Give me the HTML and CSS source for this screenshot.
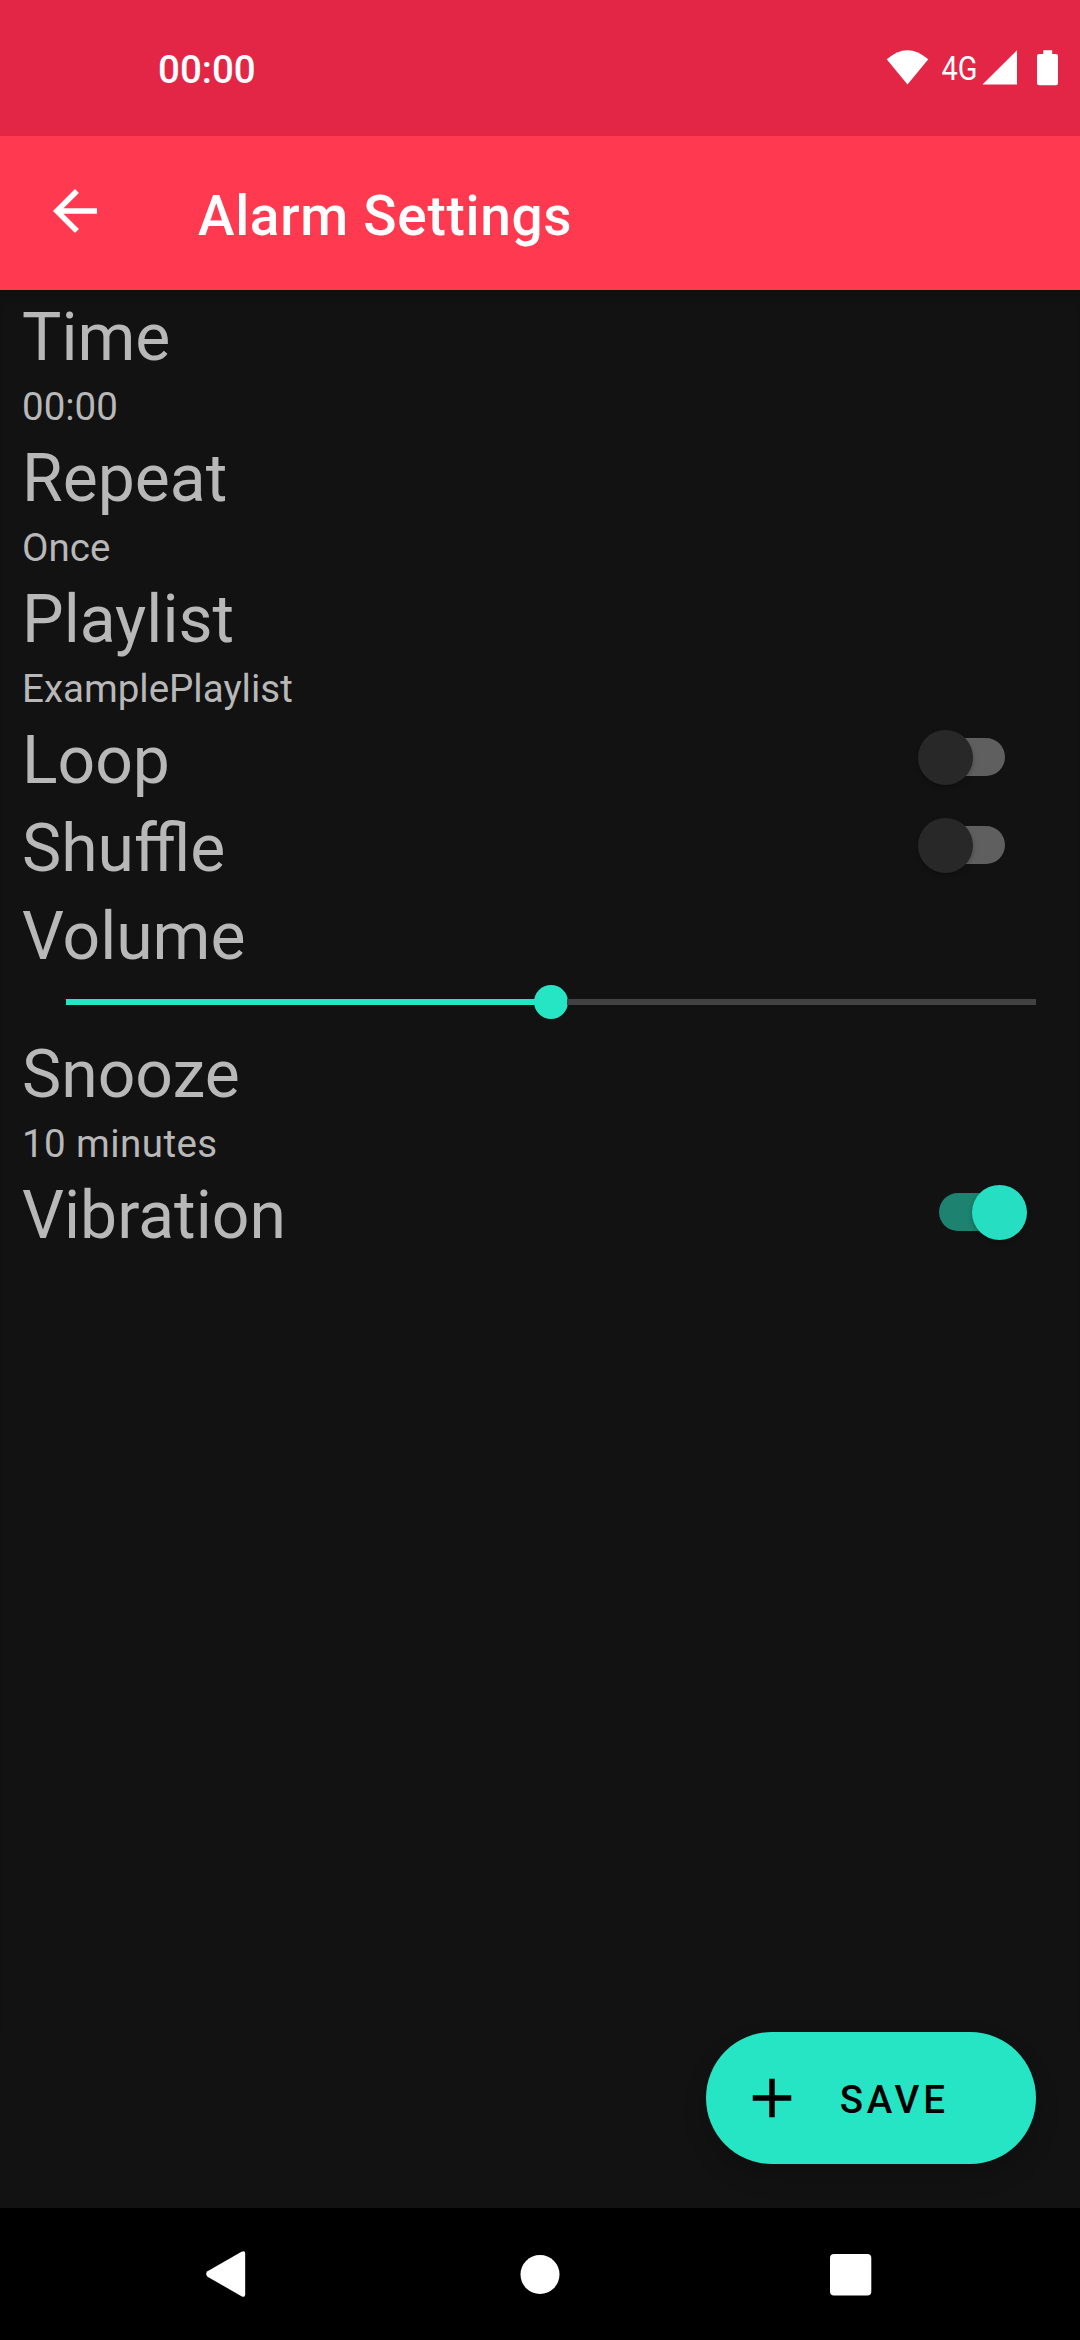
FILE: index.html
```html
<!DOCTYPE html>
<html lang="en">
<head>
<meta charset="utf-8">
<title>Alarm Settings</title>
<link rel="stylesheet" href="styles.css">
</head>
<body>
<div class="screen">
  <div class="status-bar">
    <span class="clock">00:00</span>
    <svg class="status-icons" width="180" height="50" viewBox="880 43 180 50" fill="#fff">
      <path d="M886.7 59.3Q907.5 41 928.3 59.3L907.5 84.5Z"/>
      <text class="network" x="941.5" y="80" textLength="36" lengthAdjust="spacingAndGlyphs">4G</text>
      <path d="M1017 50.3V84.5H982.5Z"/>
      <path d="M1043.3 50.3h8.9v3.7h3.8q2 0 2 2v27.3q0 2-2 2h-17q-2 0-2-2V56q0-2 2-2h4.3z"/>
    </svg>
  </div>
  <header class="toolbar">
    <svg class="back" width="66" height="66" viewBox="0 0 24 24" fill="#fff"><path d="M20 11H7.83l5.59-5.59L12 4l-8 8 8 8 1.41-1.41L7.83 13H20v-2z"/></svg>
    <h1 class="title">Alarm Settings</h1>
  </header>
  <main class="settings">
    <div class="row"><span class="label">Time</span></div>
    <div class="value">00:00</div>
    <div class="row"><span class="label">Repeat</span></div>
    <div class="value">Once</div>
    <div class="row"><span class="label">Playlist</span></div>
    <div class="value">ExamplePlaylist</div>
    <div class="row"><span class="label">Loop</span><span class="switch"><span class="thumb"></span></span></div>
    <div class="row"><span class="label">Shuffle</span><span class="switch"><span class="thumb"></span></span></div>
    <div class="row"><span class="label">Volume</span></div>
    <div class="slider"><span class="fill"></span><span class="knob"></span><span class="rest"></span></div>
    <div class="row"><span class="label">Snooze</span></div>
    <div class="value spaced">10 minutes</div>
    <div class="row"><span class="label">Vibration</span><span class="switch on"><span class="thumb"></span></span></div>
  </main>
  <div class="actions">
    <button class="save">
      <svg class="plus" width="66" height="66" viewBox="0 0 24 24"><path d="M19 13h-6v6h-2v-6H5v-2h6V5h2v6h6v2z"/></svg>
      <span>SAVE</span>
    </button>
  </div>
  <nav class="nav-bar">
    <svg width="60" height="60" viewBox="0 0 60 60" fill="#fff"><path d="M11.5 27.3L45.5 7.8Q49.2 6 49.2 9.5V50.5Q49.2 54 45.5 52.2L11.5 32.7Q8.8 30 11.5 27.3Z"/></svg>
    <svg width="60" height="60" viewBox="0 0 60 60" fill="#fff"><circle cx="31" cy="30.5" r="19.5"/></svg>
    <svg width="60" height="60" viewBox="0 0 60 60" fill="#fff"><rect x="9" y="10" width="41.3" height="41.5" rx="4"/></svg>
  </nav>
</div>
</body>
</html>
```

FILE: styles.css
```css
* { box-sizing: border-box; }

body {
  margin: 0;
  background: #121212;
  font-family: Roboto, "Liberation Sans", sans-serif;
}

.screen {
  width: 1080px;
  height: 2340px;
  display: flex;
  flex-direction: column;
  background: #121212;
}

.status-bar {
  height: 136px;
  padding: 0 20px 0 158px;
  display: flex;
  justify-content: space-between;
  align-items: center;
  background: #e32645;
  color: #fff;
}

.clock {
  font-size: 38.5px;
  line-height: 46px;
  font-weight: 500;
  padding-top: 3px;
}

.network { font-size: 33px; }

.toolbar {
  height: 154px;
  padding-left: 42px;
  display: flex;
  align-items: center;
  background: #ff394f;
  color: #fff;
}

.back { margin-bottom: 4px; }

.title {
  margin: 0 0 0 90px;
  padding-top: 6px;
  font-size: 55px;
  line-height: 66px;
  font-weight: 500;
  letter-spacing: 0.69px;
}

.settings {
  flex: 1;
  color: #b8b8b8;
  box-shadow: inset 0 10px 10px -4px rgba(0, 0, 0, 0.12);
}

.row {
  height: 88px;
  padding: 0 53px 0 22px;
  display: flex;
  justify-content: space-between;
  align-items: center;
}

.label {
  font-size: 66px;
  line-height: 81px;
  padding-top: 7px;
}

.value {
  height: 53px;
  padding: 5px 22px 0;
  font-size: 38.5px;
  line-height: 48px;
}

.spaced { letter-spacing: 0.43px; }

.switch {
  width: 66px;
  height: 38px;
  margin-right: 22px;
  border-radius: 19px;
  display: flex;
  align-items: center;
  background: #5f5f5f;
}

.thumb {
  flex: none;
  width: 55px;
  height: 55px;
  margin-left: -21px;
  border-radius: 50%;
  background: #282828;
  box-shadow: 0 2px 4px rgba(0, 0, 0, 0.25);
}

.switch.on { background: #1d8270; }

.switch.on .thumb {
  margin-left: 33px;
  background: #26dfc3;
}

.slider {
  height: 50px;
  padding: 0 44px 0 66px;
  display: flex;
  align-items: center;
}

.fill, .rest {
  flex: 1;
  height: 6px;
}

.fill { background: #26e5c5; }
.rest { background: #424242; }

.knob {
  width: 34px;
  height: 34px;
  margin: 0 -1px;
  border-radius: 50%;
  background: #26e5c5;
}

.actions {
  padding: 0 44px 44px;
  display: flex;
  justify-content: flex-end;
}

.save {
  width: 330px;
  height: 132px;
  padding: 0 0 0 33px;
  border: 0;
  border-radius: 66px;
  display: flex;
  align-items: center;
  gap: 34.7px;
  background: #26e5c5;
  color: #000;
  font-family: inherit;
  font-size: 38.5px;
  line-height: 46px;
  font-weight: 500;
  letter-spacing: 3.8px;
  box-shadow: 0 12px 24px rgba(0, 0, 0, 0.2);
}

.save span { padding-top: 3px; }

.nav-bar {
  height: 132px;
  padding: 0 199px 0 196px;
  display: grid;
  grid-template-columns: 60px 60px 60px;
  justify-content: space-between;
  align-items: center;
  background: #000;
}
```
